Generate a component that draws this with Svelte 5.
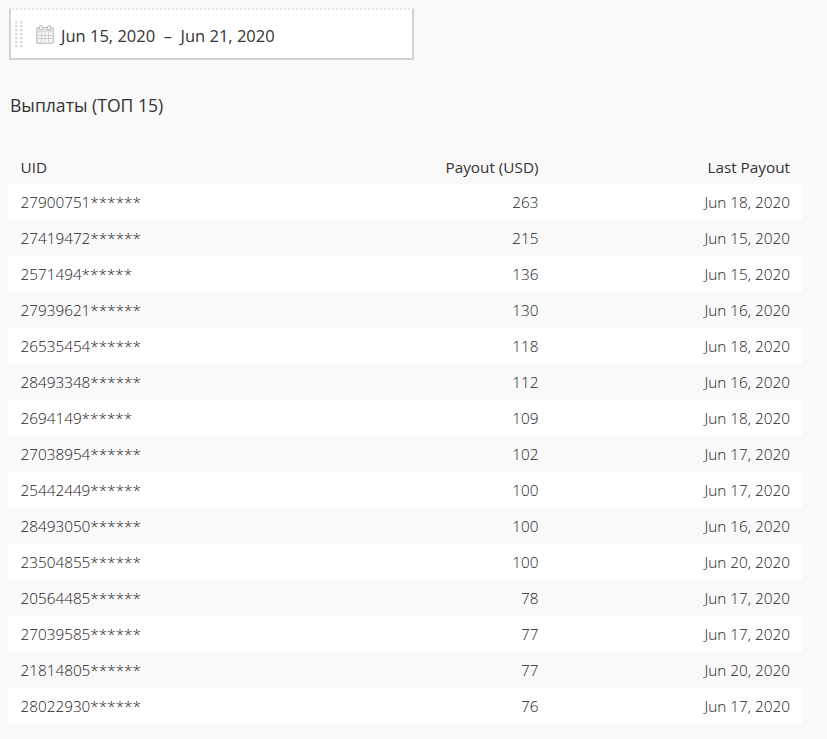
<script>
  const rows = [
    ['27900751******', 263, 'Jun 18, 2020'],
    ['27419472******', 215, 'Jun 15, 2020'],
    ['2571494******', 136, 'Jun 15, 2020'],
    ['27939621******', 130, 'Jun 16, 2020'],
    ['26535454******', 118, 'Jun 18, 2020'],
    ['28493348******', 112, 'Jun 16, 2020'],
    ['2694149******', 109, 'Jun 18, 2020'],
    ['27038954******', 102, 'Jun 17, 2020'],
    ['25442449******', 100, 'Jun 17, 2020'],
    ['28493050******', 100, 'Jun 16, 2020'],
    ['23504855******', 100, 'Jun 20, 2020'],
    ['20564485******', 78, 'Jun 17, 2020'],
    ['27039585******', 77, 'Jun 17, 2020'],
    ['21814805******', 77, 'Jun 20, 2020'],
    ['28022930******', 76, 'Jun 17, 2020']
  ];
</script>

<div class="page">
  <div class="filter">
    <svg class="grip" width="8" height="27" viewBox="0 0 8 27" aria-hidden="true">
      {#each [0, 1, 2, 3, 4, 5, 6] as r}
        <rect x="0" y={r * 4} width="2.5" height="2.5" />
        <rect x="5" y={r * 4} width="2.5" height="2.5" />
      {/each}
    </svg>
    <svg class="cal" width="18" height="19" viewBox="0 0 18 19" aria-hidden="true">
      <rect x="0.5" y="2.5" width="17" height="16" rx="1.5" fill="#e0e0e0" stroke="#c6c6c6" />
      <rect x="2" y="7.5" width="14" height="9.5" fill="#f7f7f7" />
      <path d="M2 10.5h14M2 13.5h14M5.5 7.5v9.5M9 7.5v9.5M12.5 7.5v9.5" stroke="#cdcdcd" fill="none" />
      <rect x="3.5" y="0.5" width="3" height="4.5" rx="1.5" fill="#f7f7f7" stroke="#bcbcbc" />
      <rect x="11.5" y="0.5" width="3" height="4.5" rx="1.5" fill="#f7f7f7" stroke="#bcbcbc" />
    </svg>
    <span class="range">Jun 15, 2020&nbsp; –&nbsp; Jun 21, 2020</span>
  </div>

  <h2>Выплаты (ТОП 15)</h2>

  <div class="table">
    <div class="row head">
      <span>UID</span>
      <span class="num">Payout (USD)</span>
      <span class="num">Last Payout</span>
    </div>
    {#each rows as row}
      <div class="row body">
        <span>{row[0]}</span>
        <span class="num">{row[1]}</span>
        <span class="num">{row[2]}</span>
      </div>
    {/each}
  </div>
</div>

<style>
  :global(body) {
    margin: 0;
    background: #f9f9f9;
  }
  .page {
    font-family: "Open Sans", sans-serif;
    color: #333;
    padding: 8px 25px 15px 8px;
    height: 716px;
  }
  .filter {
    box-sizing: border-box;
    width: 405px;
    height: 52px;
    margin-left: 1px;
    background: #fff;
    border: 2px solid #d2d2d2;
    border-top: 2px dotted #e4e4e4;
    display: flex;
    align-items: center;
    padding-left: 4px;
  }
  .grip {
    fill: #dcdcdc;
    flex: none;
  }
  .cal {
    margin-left: 13px;
    flex: none;
  }
  .range {
    margin-left: 7px;
    font-size: 16.5px;
    line-height: 24px;
    padding-top: 3px;
    color: #333;
  }
  h2 {
    margin: 34px 0 0 2px;
    font-size: 17.6px;
    font-weight: 400;
    line-height: 23px;
    color: #333;
  }
  .table {
    margin-top: 31px;
    width: 794px;
  }
  .row {
    box-sizing: border-box;
    display: grid;
    grid-template-columns: 1fr 259.5px 251.5px;
    padding: 0 12px 0 12.5px;
    height: 36px;
    align-items: center;
    font-size: 15.3px;
  }
  .head {
    padding-top: 2px;
    font-weight: 400;
    color: #333;
  }
  .body {
    font-weight: 300;
    color: #222;
  }
  .body:nth-child(even) {
    background: #fff;
  }
  .num {
    text-align: right;
  }
</style>
